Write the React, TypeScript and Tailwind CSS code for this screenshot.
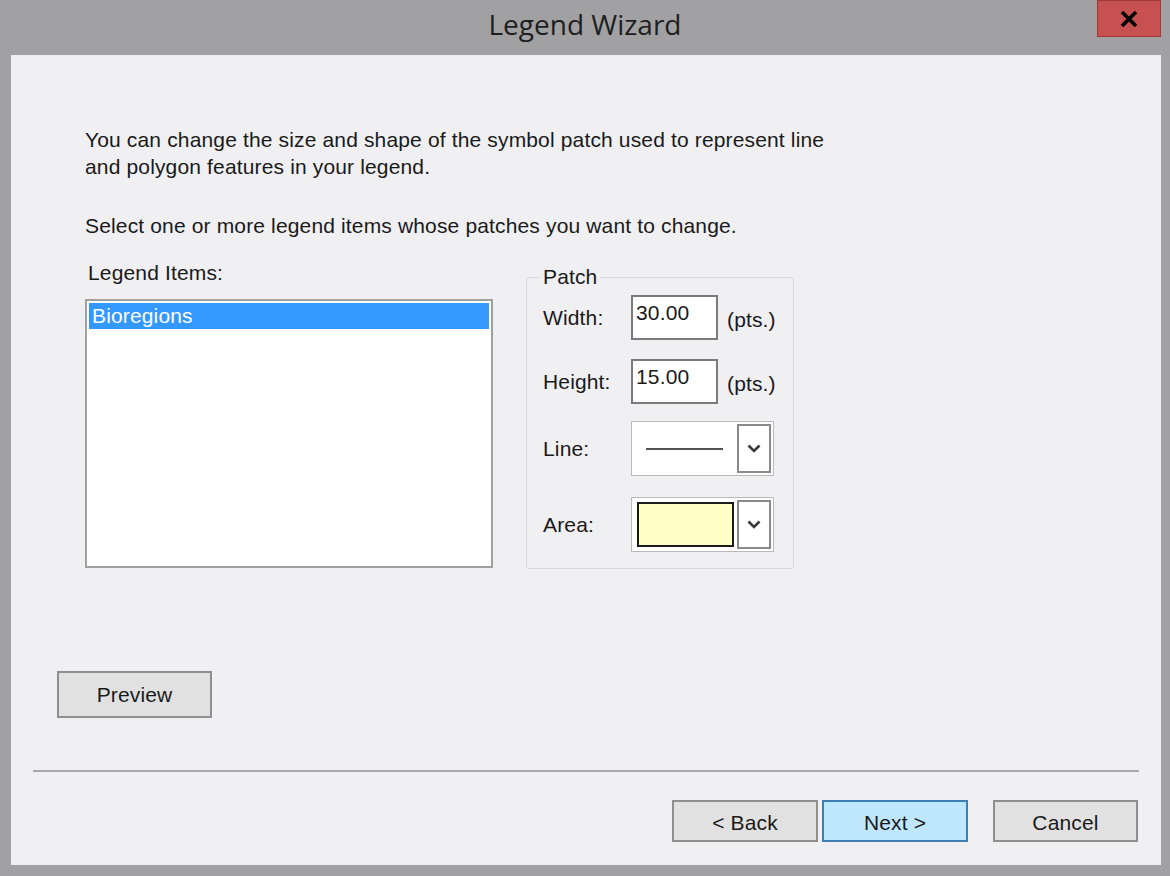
import React from "react";

const font = { fontFamily: '"Liberation Sans", Arial, sans-serif' };

function Chevron() {
  return (
    <svg width="16" height="11" viewBox="0 0 16 11">
      <path d="M2.5 2.5 L8 8 L13.5 2.5" stroke="#3a3a3a" strokeWidth="2.6" fill="none" />
    </svg>
  );
}

function Combo({ children }: { children: React.ReactNode }) {
  return (
    <div className="flex items-stretch w-[143px] h-[55px] border border-[#b9b9b9] bg-white p-[2px]">
      <div className="flex-1 flex items-center">{children}</div>
      <div className="w-[34px] ml-[2px] border-2 border-[#8a8a8a] bg-white flex items-center justify-center">
        <Chevron />
      </div>
    </div>
  );
}

function Btn({ label, primary, w }: { label: string; primary?: boolean; w: string }) {
  return (
    <div
      className={`${w} h-[42px] flex items-center justify-center border-2 pt-[2px] text-[21px] tracking-[0.15px] text-[#1a1a1a] ${
        primary ? "bg-[#bee6fd] border-[#3c7fb1]" : "bg-[#e1e1e1] border-[#8f8f8f]"
      }`}
    >
      {label}
    </div>
  );
}

export default function App() {
  return (
    <div className="w-[1170px] h-[876px] bg-[#a1a1a3] flex flex-col overflow-hidden" style={font}>
      <div className="h-[55px] flex relative">
        <div
          className="flex-1 flex items-center justify-center text-[28px] text-[#1e1e1e] pb-[7px]"
          style={{ fontFamily: '"Open Sans", "Noto Sans", sans-serif' }}
        >
          Legend Wizard
        </div>
        <div className="absolute left-[1097px] top-0 w-[64px] h-[37px] bg-[#c75050] border border-[#a33a3a] flex items-center justify-center">
          <svg width="18" height="16" viewBox="0 0 18 16">
            <path d="M2 1 L16 15 M16 1 L2 15" stroke="#000" strokeWidth="3.6" />
          </svg>
        </div>
      </div>
      <div className="ml-[11px] w-[1150px] h-[810px] bg-[#f0eff1] flex flex-col text-[21px] tracking-[0.15px] text-[#1a1a1a] leading-[27px]">
        <div className="ml-[74px] mt-[71px] w-[760px]">
          You can change the size and shape of the symbol patch used to represent line and polygon features in your legend.
        </div>
        <div className="ml-[74px] mt-[32px]">Select one or more legend items whose patches you want to change.</div>
        <div className="flex ml-[74px] mt-[20px]">
          <div className="flex flex-col w-[408px]">
            <div className="ml-[3px] h-[27px]">Legend Items:</div>
            <div className="mt-[13px] h-[269px] border-2 border-[#a0a0a0] bg-white p-[2px]">
              <div className="h-[26px] bg-[#3399ff] text-white pl-[3px] leading-[26px]">Bioregions</div>
            </div>
          </div>
          <fieldset className="ml-[33px] w-[268px] h-[304px] mt-[6px] border border-[#d9d9dc] rounded-[3px] px-[16px]">
            <legend className="-ml-[3px] px-[3px] leading-[24px]">Patch</legend>
            <div className="flex items-center mt-[6px]">
              <div className="w-[88px]">Width:</div>
              <div className="w-[87px] h-[45px] border-2 border-[#7a7a7a] bg-white pl-[3px] pt-[4px] leading-[24px]">30.00</div>
              <div className="ml-[9px] mt-[4px]">(pts.)</div>
            </div>
            <div className="flex items-center mt-[19px]">
              <div className="w-[88px]">Height:</div>
              <div className="w-[87px] h-[45px] border-2 border-[#7a7a7a] bg-white pl-[3px] pt-[4px] leading-[24px]">15.00</div>
              <div className="ml-[9px] mt-[4px]">(pts.)</div>
            </div>
            <div className="flex items-center mt-[17px]">
              <div className="w-[88px]">Line:</div>
              <Combo>
                <div className="ml-[12px] w-[77px] h-[2px] bg-[#555]" />
              </Combo>
            </div>
            <div className="flex items-center mt-[21px]">
              <div className="w-[88px]">Area:</div>
              <Combo>
                <div className="ml-[3px] w-[97px] h-[45px] bg-[#ffffc8] border-2 border-[#1a1a1a]" />
              </Combo>
            </div>
          </fieldset>
        </div>
        <div className="ml-[46px] mt-[102px] w-[155px] h-[47px] bg-[#e1e1e1] border-2 border-[#8f8f8f] flex items-center justify-center">
          Preview
        </div>
        <div className="ml-[22px] mt-[52px] w-[1106px] h-[2px] bg-[#a9a9ab]" />
        <div className="flex justify-end mt-[28px] pr-[23px]">
          <Btn label="< Back" w="w-[146px]" />
          <div className="w-[4px]" />
          <Btn label="Next >" w="w-[146px]" primary />
          <div className="w-[25px]" />
          <Btn label="Cancel" w="w-[145px]" />
        </div>
      </div>
    </div>
  );
}
